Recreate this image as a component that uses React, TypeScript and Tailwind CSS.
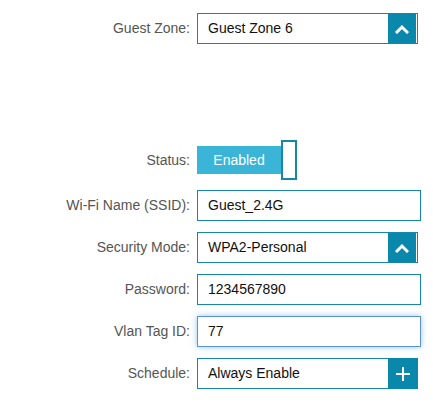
import React from "react";

const font = { fontFamily: '"Liberation Sans", Arial, sans-serif' };

function Chevron() {
  return (
    <svg width="14" height="10" viewBox="0 0 14 10" fill="none">
      <path d="M2 8 L7 3 L12 8" stroke="white" strokeWidth="3" strokeLinecap="square" />
    </svg>
  );
}

function Plus() {
  return (
    <svg width="16" height="16" viewBox="0 0 16 16" fill="none">
      <path d="M8 1 V15 M1 8 H15" stroke="white" strokeWidth="2" />
    </svg>
  );
}

function Label({ children }: { children: React.ReactNode }) {
  return <div className="text-right text-[14px] text-[#555]">{children}</div>;
}

function SelectBox({ value }: { value: string }) {
  return (
    <div className="flex h-[31px] w-[221px] items-stretch border border-[#1687a9] bg-white">
      <div className="flex flex-1 items-center pl-[10px] text-[14px] text-[#111]">{value}</div>
      <div className="mr-px flex w-[28px] items-center justify-center bg-[#0a88ab]">
        <Chevron />
      </div>
    </div>
  );
}

function TextBox({ value, focused }: { value: string; focused?: boolean }) {
  return (
    <div
      className={
        focused
          ? "flex h-[31px] w-[224px] items-center border border-[#5896c9] bg-white pl-[10px] text-[14px] text-[#111] shadow-[0_0_6px_rgba(102,175,233,0.7)]"
          : "flex h-[31px] w-[224px] items-center border border-[#1687a9] bg-white pl-[10px] text-[14px] text-[#111]"
      }
    >
      {value}
    </div>
  );
}

export default function App() {
  return (
    <div className="h-[403px] w-[433px] bg-white pt-[13px]" style={font}>
      <div className="grid grid-cols-[190px_1fr] items-center gap-x-[7px]">
        <Label>Guest Zone:</Label>
        <SelectBox value="Guest Zone 6" />
      </div>

      <div className="mt-[96px] grid grid-cols-[190px_1fr] items-center gap-x-[7px]">
        <Label>Status:</Label>
        <div className="flex items-center">
          <div className="flex h-[28px] w-[84px] items-center justify-center bg-[#3ab5d7] text-[14px] text-white">
            Enabled
          </div>
          <div className="h-[40px] w-[16px] border-2 border-[#1687a9] bg-white" />
        </div>
      </div>

      <div className="mt-[10px] grid grid-cols-[190px_1fr] items-center gap-x-[7px] gap-y-[11px]">
        <Label>Wi-Fi Name (SSID):</Label>
        <TextBox value="Guest_2.4G" />
        <Label>Security Mode:</Label>
        <SelectBox value="WPA2-Personal" />
        <Label>Password:</Label>
        <TextBox value="1234567890" />
        <Label>Vlan Tag ID:</Label>
        <TextBox value="77" focused />
        <Label>Schedule:</Label>
        <div className="flex h-[31px] w-[221px] items-stretch border border-r-0 border-[#1687a9] bg-white">
          <div className="flex flex-1 items-center pl-[10px] text-[14px] text-[#111]">Always Enable</div>
          <div className="-my-px flex w-[30px] items-center justify-center bg-[#0a88ab]">
            <Plus />
          </div>
        </div>
      </div>
    </div>
  );
}
